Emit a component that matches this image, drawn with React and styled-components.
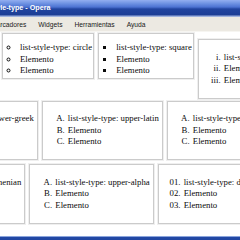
import React from 'react';
import styled, { createGlobalStyle } from 'styled-components';

const GlobalStyle = createGlobalStyle`
  html, body {
    margin: 0;
    padding: 0;
    background: #ffffff;
  }
  body {
    width: 240px;
    height: 240px;
    overflow: hidden;
  }
`;

const Window = styled.div`
  width: 240px;
  height: 240px;
  display: flex;
  flex-direction: column;
  overflow: hidden;
  background: #ffffff;
`;

const TitleBar = styled.div`
  height: 17px;
  flex: none;
  display: flex;
  align-items: center;
  overflow: hidden;
  background: linear-gradient(
    to bottom,
    #93aef0 0px,
    #7396e4 3px,
    #4d73d2 7px,
    #21449f 9px,
    #1c3d95 15px,
    #9fb2de 16px
  );
`;

const Title = styled.span`
  margin-left: -23px;
  margin-top: -2px;
  white-space: nowrap;
  font-family: "Liberation Sans", Arial, sans-serif;
  font-weight: bold;
  font-size: 7.2px;
  color: #ffffff;
`;

const MenuBar = styled.div`
  height: 14px;
  flex: none;
  display: flex;
  align-items: center;
  background: #ece9e2;
  border-bottom: 1px solid #f6f5f1;
  overflow: hidden;
`;

const MenuItem = styled.span`
  padding: 0 6px;
  white-space: nowrap;
  font-family: "Liberation Sans", Arial, sans-serif;
  font-size: 6.7px;
  color: #202020;
  &:first-child {
    margin-left: -15px;
  }
`;

const Content = styled.div`
  flex: 1;
  padding-top: 1px;
  overflow: hidden;
`;

const Row = styled.div`
  display: flex;
  align-items: flex-start;
  gap: 4px;
  margin-left: ${({ $offset }) => $offset}px;
  margin-bottom: ${({ $after }) => $after}px;
  white-space: nowrap;
`;

const Box = styled.ul`
  flex: none;
  margin: ${({ $top }) => $top || 0}px 0 0 0;
  padding: ${({ $compact }) => ($compact ? '8px 1px 1px 16px' : '11.5px 3px 11.5px 24px')};
  border: 1px solid #cbcbcb;
  box-shadow: 0 0 0 1px #efefef;
  list-style-type: ${({ $type }) => $type};
  font-family: "Liberation Serif", "Times New Roman", serif;
  font-size: 8.75px;
  line-height: 11.5px;
  color: #0c0c0c;
`;

const Item = styled.li`
  padding-left: 1px;
`;

const List = ({ type, compact, top }) => (
  <Box $type={type} $compact={compact} $top={top}>
    <Item>list-style-type: {type}</Item>
    <Item>Elemento</Item>
    <Item>Elemento</Item>
  </Box>
);

const BottomEdge = styled.div`
  height: 4px;
  flex: none;
  background: linear-gradient(to bottom, #8aa4dc 0px, #8aa4dc 1px, #2349a6 1px, #1f44a0 4px);
`;

export default function App() {
  return (
    <>
      <GlobalStyle />
      <Window>
        <TitleBar>
          <Title>list-style-type - Opera</Title>
        </TitleBar>
        <MenuBar>
          <MenuItem>Marcadores</MenuItem>
          <MenuItem>Widgets</MenuItem>
          <MenuItem>Herramientas</MenuItem>
          <MenuItem>Ayuda</MenuItem>
        </MenuBar>
        <Content>
          <Row $offset={2} $after={2}>
            <List type="circle" compact />
            <List type="square" compact />
            <List type="lower-roman" top={6} />
          </Row>
          <Row $offset={-87} $after={4}>
            <List type="lower-greek" />
            <List type="upper-latin" />
            <List type="upper-latin" />
          </Row>
          <Row $offset={-90} $after={0}>
            <List type="armenian" />
            <List type="upper-alpha" />
            <List type="decimal-leading-zero" />
          </Row>
        </Content>
        <BottomEdge />
      </Window>
    </>
  );
}
